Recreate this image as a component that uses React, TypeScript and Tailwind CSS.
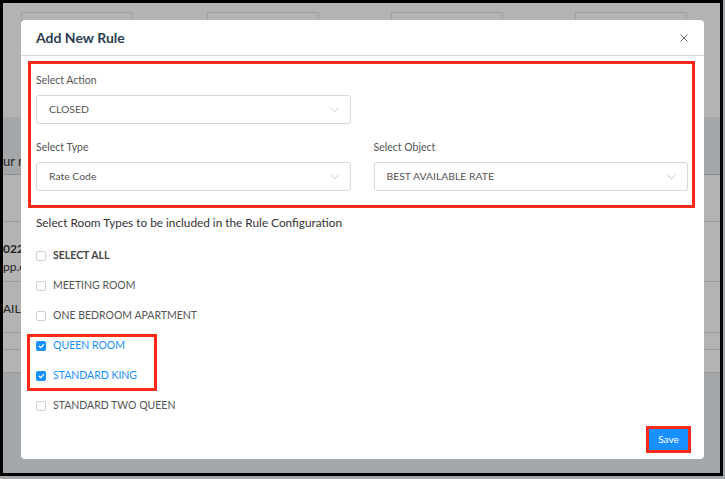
import React from 'react';

const rooms = [
    { name: 'SELECT ALL', checked: false, bold: true },
    { name: 'MEETING ROOM', checked: false },
    { name: 'ONE BEDROOM APARTMENT', checked: false },
    { name: 'QUEEN ROOM', checked: true },
    { name: 'STANDARD KING', checked: true },
    { name: 'STANDARD TWO QUEEN', checked: false },
];

function Chevron() {
    return (
        <svg width="9" height="6" viewBox="0 0 9 6" className="shrink-0">
            <path d="M0.5 0.8 L4.5 4.8 L8.5 0.8" fill="none" stroke="#c4c4c4" strokeWidth="0.9" />
        </svg>
    );
}

function SelectBox({ value }: { value: string }) {
    return (
        <div className="h-[29px] border border-[#d9d9d9] rounded-[3px] bg-white flex items-center justify-between pl-3 pr-[11px]">
            <span className="text-[10.4px] text-[#555]">{value}</span>
            <Chevron />
        </div>
    );
}

function Field({ label, value }: { label: string; value: string }) {
    return (
        <div className="flex flex-col">
            <label className="text-[10.5px] text-[#555] leading-[14px] mb-[8px]">{label}</label>
            <SelectBox value={value} />
        </div>
    );
}

function Checkbox({ checked }: { checked: boolean }) {
    if (checked) {
        return (
            <span className="w-[10px] h-[10px] rounded-[2px] bg-[#1890ff] flex items-center justify-center">
                <svg width="7" height="6" viewBox="0 0 7 6">
                    <path d="M1 3 L2.8 4.6 L6 1.2" fill="none" stroke="white" strokeWidth="1.2" />
                </svg>
            </span>
        );
    }
    return <span className="w-[10px] h-[10px] rounded-[2px] border border-[#d0d0d0] bg-white" />;
}

function Background() {
    const boxes = ['left-[18px]', 'left-[204px]', 'left-[388px]', 'left-[572px]'];
    return (
        <div className="w-full h-full bg-[#b3b3b3] flex flex-col">
            <div className="h-[9px]" />
            <div className="relative h-[105px]">
                {boxes.map((b) => (
                    <div key={b} className={`absolute top-0 ${b} w-[112px] h-[30px] border border-[#a0a0a0]`} />
                ))}
            </div>
            <div className="h-[58px] bg-[#a4a7a9] border-b border-[#8f8f8f] text-[13px] text-[#222] pt-[35px]">ur no</div>
            <div className="h-[47px] border-b border-[#999]" />
            <div className="h-[60px] border-b border-[#999] text-[12px] text-[#222] pt-[18px] leading-[18px] font-bold">
                022
                <div className="font-normal">pp.c</div>
            </div>
            <div className="h-[51px] border-b border-[#999] text-[12px] text-[#222] pt-[18px]">AILA</div>
            <div className="h-[17px] border-b border-[#999]" />
            <div className="h-[23px] border-b border-[#999]" />
            <div className="flex-1 bg-[#a4a7a9]" />
        </div>
    );
}

export default function App() {
    return (
        <div className="w-[725px] h-[479px] bg-[#a4a7a9] overflow-hidden" style={{ fontFamily: 'Lato, "Noto Sans", sans-serif' }}>
            <div className="relative w-[723px] h-[476px] border-[3px] border-black bg-[#b3b3b3] overflow-hidden">
                <Background />

                <div className="absolute left-[18px] top-[17px] w-[683px] h-[439px] bg-white rounded-[4px] flex flex-col">
                    <div className="h-[36px] border-b border-[#d6d6d6] flex items-center justify-between pl-[15px] pr-[16px]">
                        <h2 className="text-[14px] font-bold text-[#2c3e50]">Add New Rule</h2>
                        <svg width="8" height="8" viewBox="0 0 8 8">
                            <path d="M0.5 0.5 L7.5 7.5 M7.5 0.5 L0.5 7.5" stroke="#666" strokeWidth="1" />
                        </svg>
                    </div>

                    <div className="flex-1 flex flex-col pl-[7px] pr-[9px] pt-[5px]">
                        <div className="border-[3px] border-[#ff2a1a] pl-[5px] pr-[4px] pt-[9px] pb-[14px] flex flex-col gap-[16px]">
                            <div className="grid grid-cols-2 gap-[23px]">
                                <Field label="Select Action" value="CLOSED" />
                            </div>
                            <div className="grid grid-cols-2 gap-[23px]">
                                <Field label="Select Type" value="Rate Code" />
                                <Field label="Select Object" value="BEST AVAILABLE RATE" />
                            </div>
                        </div>

                        <p className="mt-[7px] pl-[8px] text-[11.8px] text-[#333] leading-[16px]">
                            Select Room Types to be included in the Rule Configuration
                        </p>

                        <div className="relative mt-[10px] pl-[8px] flex flex-col">
                            {rooms.map((r) => (
                                <div key={r.name} className="h-[30px] flex items-center gap-[7px]">
                                    <Checkbox checked={r.checked} />
                                    <span
                                        className={`text-[10.5px] ${r.checked ? 'text-[#1890ff]' : r.bold ? 'text-[#444] font-bold' : 'text-[#555]'}`}
                                    >
                                        {r.name}
                                    </span>
                                </div>
                            ))}
                            <div className="absolute left-[-1px] top-[93px] w-[130px] h-[57px] border-[3px] border-[#ff2a1a]" />
                        </div>

                        <div className="flex-1 flex items-end justify-end pb-[9px] pr-[7px]">
                            <button className="w-[39px] h-[21px] bg-[#1890ff] text-white text-[10px] ring-[3px] ring-[#ff2a1a]">
                                Save
                            </button>
                        </div>
                    </div>
                </div>
            </div>
        </div>
    );
}
